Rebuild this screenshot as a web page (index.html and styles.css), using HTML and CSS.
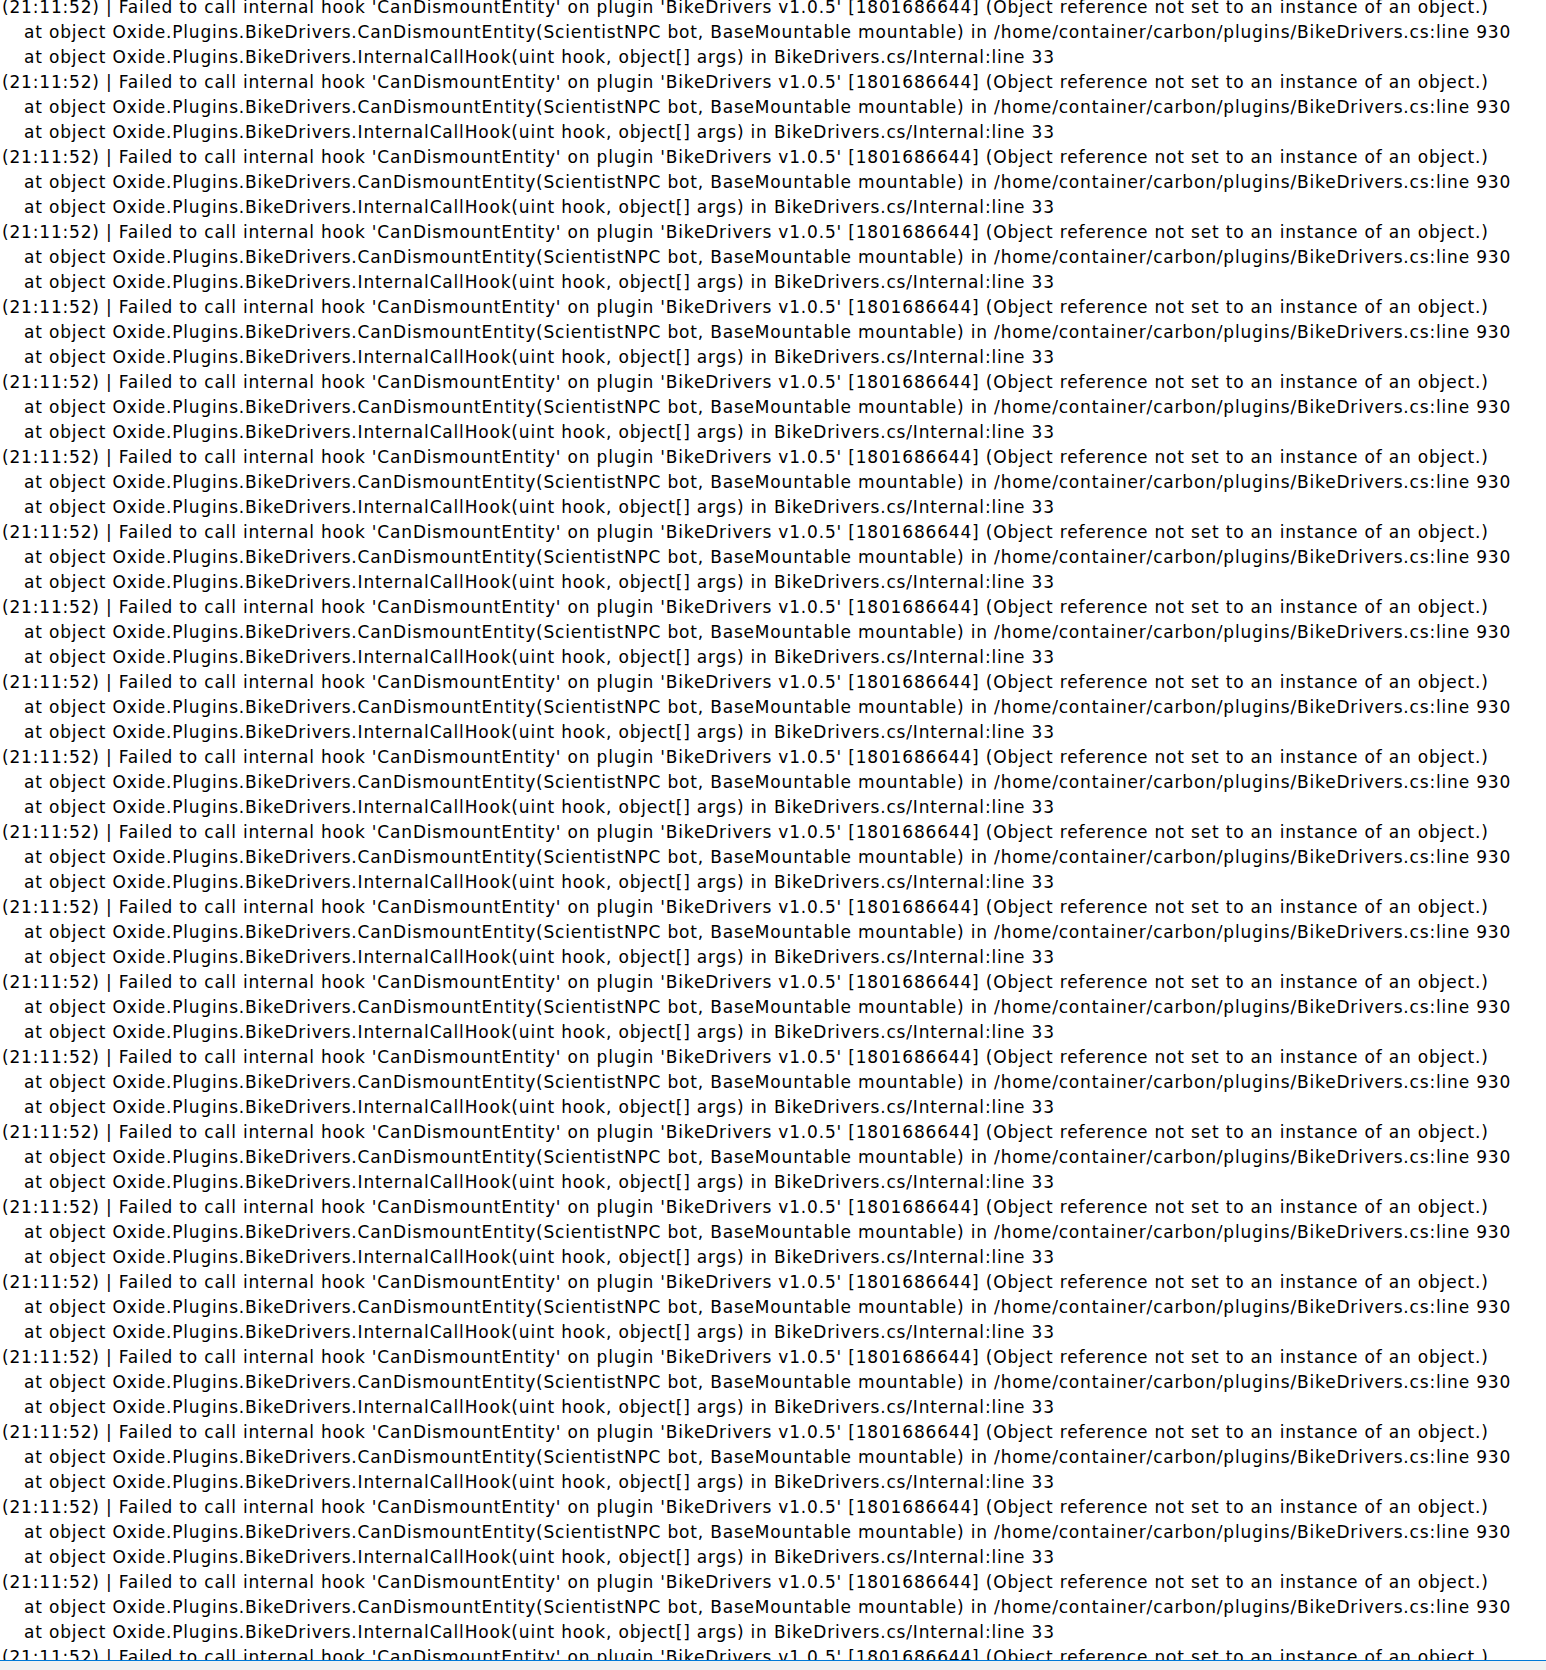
FILE: index.html
```html
<!DOCTYPE html>
<html lang="en">
<head>
<meta charset="UTF-8">
<title>Console log</title>
<link rel="stylesheet" href="styles.css">
</head>
<body>
<div class="console">
  <div class="log" id="log"></div>
</div>
<div class="statusbar"></div>

<script>
  var log = document.getElementById('log');
  var entries = 24; // how many repeated errors to print

  for (var i = 0; i < entries; i++) {
    var head = document.createElement('div');
    head.className = 'line';
    head.textContent = "(21:11:52) | Failed to call internal hook 'CanDismountEntity' on plugin 'BikeDrivers v1.0.5' [1801686644] (Object reference not set to an instance of an object.)";
    log.appendChild(head);

    var trace1 = document.createElement('div');
    trace1.className = 'line trace';
    trace1.textContent = "at object Oxide.Plugins.BikeDrivers.CanDismountEntity(ScientistNPC bot, BaseMountable mountable) in /home/container/carbon/plugins/BikeDrivers.cs:line 930";
    log.appendChild(trace1);

    var trace2 = document.createElement('div');
    trace2.className = 'line trace';
    trace2.textContent = "at object Oxide.Plugins.BikeDrivers.InternalCallHook(uint hook, object[] args) in BikeDrivers.cs/Internal:line 33";
    log.appendChild(trace2);
  }
</script>
</body>
</html>
```

FILE: styles.css
```css
body {
  margin: 0;
  padding: 0;
  background-color: #f0f0f0;
  font-family: 'DejaVu Sans', Verdana, sans-serif;
}
.console {
  height: 1660px;
  overflow: hidden;
  background-color: #fff;
  border-bottom: 1px solid #0078d7;
}
.log {
  margin-top: -5px;
  padding-left: 2px;
  color: #000;
  font-size: 17px;
  letter-spacing: 0.82px;
  line-height: 25px;
  white-space: nowrap;
}
.trace {
  padding-left: 22px;
}
.statusbar {
  height: 9px;
  background-color: #f0f0f0;
}
```
